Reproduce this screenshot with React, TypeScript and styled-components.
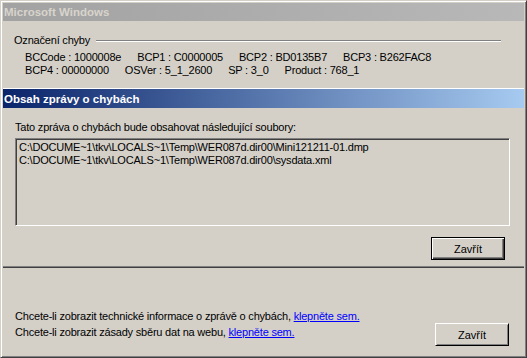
import styled, { createGlobalStyle } from "styled-components";

const GlobalStyle = createGlobalStyle`
  html, body {
    margin: 0;
    padding: 0;
    background: #d4d0c8;
  }
  * {
    box-sizing: border-box;
  }
`;

const PARAMS = [
  ["BCCode : 1000008e", "BCP1 : C0000005", "BCP2 : BD0135B7", "BCP3 : B262FAC8"],
  ["BCP4 : 00000000", "OSVer : 5_1_2600", "SP : 3_0", "Product : 768_1"],
];

const FILES = [
  "C:\\DOCUME~1\\tkv\\LOCALS~1\\Temp\\WER087d.dir00\\Mini121211-01.dmp",
  "C:\\DOCUME~1\\tkv\\LOCALS~1\\Temp\\WER087d.dir00\\sysdata.xml",
];

const App = () => {
  return (
    <>
      <GlobalStyle />
      <S.Window>
        <S.TitleBar>Microsoft Windows</S.TitleBar>

        <S.TopSection>
          <S.GroupHeader>
            <span>Označení chyby</span>
            <S.GroupLine />
          </S.GroupHeader>
          {PARAMS.map((row, i) => (
            <S.ParamRow key={i}>
              {row.map((p) => (
                <span key={p}>{p}</span>
              ))}
            </S.ParamRow>
          ))}
        </S.TopSection>

        <S.LightRule />
        <S.SectionHeader>Obsah zprávy o chybách</S.SectionHeader>

        <S.ContentSection>
          <S.Label>Tato zpráva o chybách bude obsahovat následující soubory:</S.Label>
          <S.FileList>
            {FILES.map((f) => (
              <S.FileItem key={f}>{f}</S.FileItem>
            ))}
          </S.FileList>
          <S.ButtonRow>
            <S.Button $default>Zavřít</S.Button>
          </S.ButtonRow>
        </S.ContentSection>

        <S.DarkRule />

        <S.BottomSection>
          <S.Links>
            <div>
              Chcete-li zobrazit technické informace o zprávě o chybách,{" "}
              <S.Link href="#">klepněte sem.</S.Link>
            </div>
            <div>
              Chcete-li zobrazit zásady sběru dat na webu, <S.Link href="#">klepněte sem.</S.Link>
            </div>
          </S.Links>
          <S.Button>Zavřít</S.Button>
        </S.BottomSection>
      </S.Window>
    </>
  );
};

export default App;

const font = `"Liberation Sans", Arial, sans-serif`;

const S = {
  Window: styled.div`
    width: 527px;
    height: 358px;
    display: flex;
    flex-direction: column;
    padding: 2px;
    background: #d4d0c8;
    border: 1px solid;
    border-color: #d4d0c8 #404040 #404040 #d4d0c8;
    box-shadow: inset 1px 1px #ffffff, inset -1px -1px #808080;
    font-family: ${font};
    font-size: 11px;
    letter-spacing: -0.2px;
    color: #000;
  `,

  TitleBar: styled.div`
    height: 18px;
    flex-shrink: 0;
    padding-left: 1px;
    display: flex;
    align-items: center;
    background: linear-gradient(to right, #a2a2a2, #b8b8b8);
    color: #d8d4cc;
    font-weight: bold;
    font-size: 11.5px;
    letter-spacing: 0;
  `,

  TopSection: styled.div`
    height: 67px;
    flex-shrink: 0;
    padding: 13px 0 0 11px;
  `,

  GroupHeader: styled.div`
    display: flex;
    align-items: center;
    line-height: 13px;
    padding-right: 23px;
    margin-bottom: 4px;
  `,

  GroupLine: styled.div`
    flex: 1;
    height: 2px;
    margin-left: 6px;
    border-top: 1px solid #808080;
    border-bottom: 1px solid #ffffff;
  `,

  ParamRow: styled.div`
    display: flex;
    gap: 16px;
    padding-left: 11px;
    line-height: 13px;
  `,

  LightRule: styled.div`
    height: 1px;
    flex-shrink: 0;
    background: #ffffff;
  `,

  SectionHeader: styled.div`
    height: 19px;
    flex-shrink: 0;
    padding-left: 1px;
    display: flex;
    align-items: center;
    background: linear-gradient(to right, #0a246a, #a6caf0);
    color: #ffffff;
    font-weight: bold;
    font-size: 11.5px;
    letter-spacing: 0;
  `,

  ContentSection: styled.div`
    height: 158px;
    flex-shrink: 0;
    padding: 13px 19px 0 12px;
    display: flex;
    flex-direction: column;
  `,

  Label: styled.div`
    line-height: 13px;
    margin-bottom: 4px;
  `,

  FileList: styled.div`
    height: 88px;
    margin-right: -5px;
    padding: 2px 2px;
    border: 1px solid;
    border-color: #808080 #ffffff #ffffff #808080;
    box-shadow: inset 1px 1px #404040, inset -1px -1px #d4d0c8;
  `,

  FileItem: styled.div`
    line-height: 13px;
    padding-left: 1px;
    white-space: nowrap;
  `,

  ButtonRow: styled.div`
    display: flex;
    justify-content: flex-end;
    margin-top: 11px;
  `,

  Button: styled.button<{ $default?: boolean }>`
    width: 74px;
    height: 23px;
    padding: 0;
    background: #d4d0c8;
    font-family: ${font};
    font-size: 11px;
    color: #000;
    border: 1px solid;
    border-color: ${(p) => (p.$default ? "#000" : "#ffffff #000 #000 #ffffff")};
    box-shadow: ${(p) =>
      p.$default
        ? "inset 1px 1px #ffffff, inset -1px -1px #404040, inset -2px -2px #808080"
        : "inset 1px 1px #d4d0c8, inset -1px -1px #808080"};
  `,

  DarkRule: styled.div`
    height: 2px;
    flex-shrink: 0;
    border-top: 1px solid #808080;
    border-bottom: 1px solid #404040;
  `,

  BottomSection: styled.div`
    flex: 1;
    display: flex;
    justify-content: space-between;
    align-items: flex-end;
    padding: 0 15px 9px 12px;
  `,

  Links: styled.div`
    line-height: 16px;
    margin-bottom: 6px;
  `,

  Link: styled.a`
    color: #0000ff;
    text-decoration: underline;
  `,
};
